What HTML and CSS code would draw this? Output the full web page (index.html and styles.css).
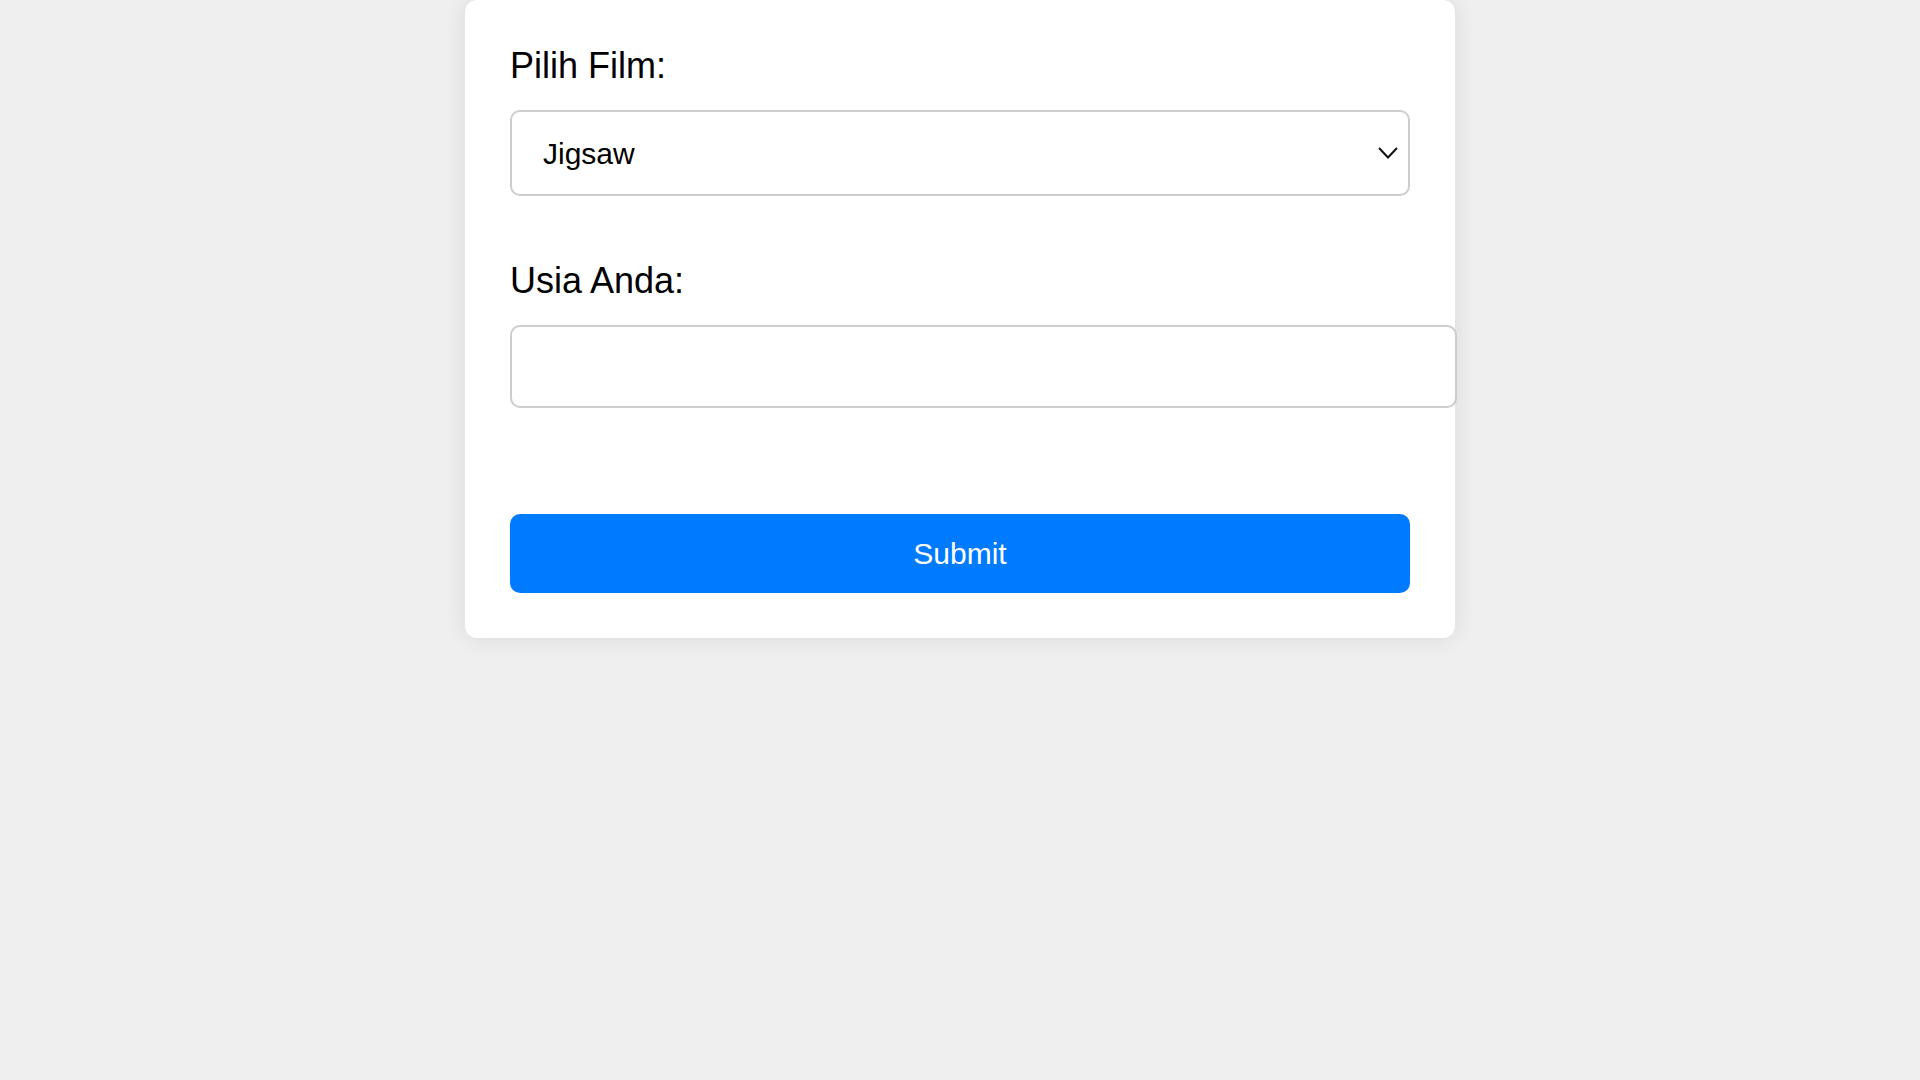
FILE: index.html
```html
<!DOCTYPE html>
<html lang="id">
<head>
<meta charset="utf-8">
<title>Pilih Film</title>
<link rel="stylesheet" href="styles.css">
</head>
<body>
<div class="card">
  <form class="form">
    <div class="group group-film">
      <label class="label" for="film">Pilih Film:</label>
      <div class="select-wrap">
        <select id="film" class="select">
          <option>Jigsaw</option>
        </select>
        <svg class="chevron" width="20" height="12" viewBox="0 0 20 12"><polyline points="1,1 10,10.5 19,1" fill="none" stroke="#111" stroke-width="2"/></svg>
      </div>
    </div>
    <div class="group group-age">
      <label class="label" for="usia">Usia Anda:</label>
      <input id="usia" class="input" type="text">
    </div>
    <button type="button" class="button">Submit</button>
  </form>
</div>
</body>
</html>
```
FILE: styles.css
```css
html, body {
  margin: 0;
  padding: 0;
}
body {
  background: #efefef;
  font-family: "Liberation Sans", Arial, sans-serif;
  min-height: 1080px;
}
.card {
  box-sizing: border-box;
  width: 990px;
  margin: 0 auto;
  padding: 45px;
  background: #fff;
  border-radius: 12px;
  box-shadow: 0 0 22px rgba(0, 0, 0, 0.1);
}
.form {
  display: flex;
  flex-direction: column;
}
.group-film {
  margin-bottom: 64px;
}
.group-age {
  margin-bottom: 106px;
}
.label {
  display: block;
  font-size: 36px;
  line-height: 41px;
  color: #000;
  margin-bottom: 24px;
}
.select-wrap {
  position: relative;
  width: 900px;
}
.select {
  box-sizing: border-box;
  -webkit-appearance: none;
  appearance: none;
  width: 900px;
  height: 86px;
  border: 2px solid #cdcdcd;
  border-radius: 10px;
  background: #fff;
  padding: 0 0 0 31px;
  font-family: "Liberation Sans", Arial, sans-serif;
  font-size: 30px;
  color: #000;
  outline: none;
  display: block;
}
.chevron {
  position: absolute;
  right: 12px;
  top: 37px;
  pointer-events: none;
}
.input {
  box-sizing: border-box;
  display: block;
  width: 947px;
  height: 83px;
  border: 2px solid #cdcdcd;
  border-radius: 10px;
  background: #fff;
  padding: 0 30px;
  font-family: "Liberation Sans", Arial, sans-serif;
  font-size: 30px;
  outline: none;
}
.button {
  display: block;
  width: 900px;
  height: 79px;
  border: none;
  border-radius: 10px;
  background: #007bff;
  color: #fff;
  font-family: "Liberation Sans", Arial, sans-serif;
  font-size: 30px;
  padding: 0;
  cursor: pointer;
}
```
